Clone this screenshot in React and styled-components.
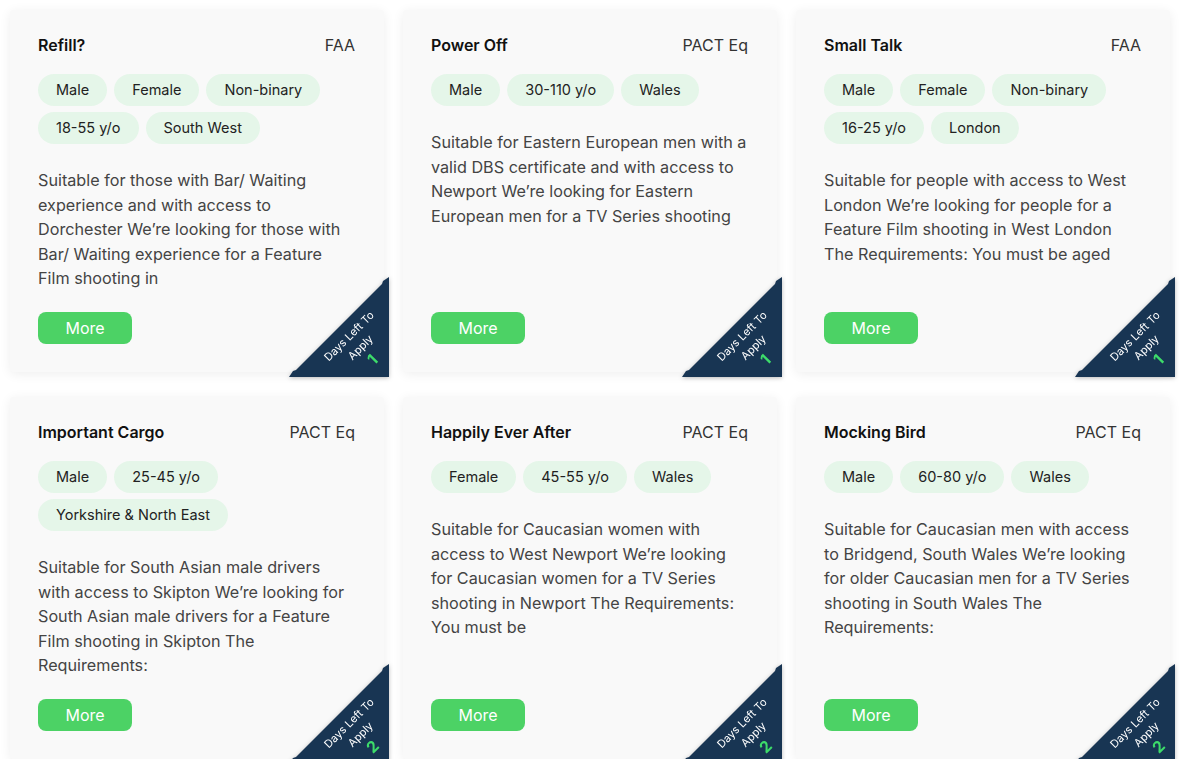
import styled, { createGlobalStyle } from "styled-components";

const GlobalStyle = createGlobalStyle`
  body {
    margin: 0;
    background: #ffffff;
    font-family: Inter, "Noto Sans", sans-serif;
  }
`;

const Grid = styled.div`
  display: grid;
  grid-template-columns: repeat(3, 374px);
  column-gap: 19px;
  row-gap: 25px;
  padding: 10px 0 0 10px;
`;

const Card = styled.div`
  position: relative;
  box-sizing: border-box;
  min-height: 362px;
  background: #f9f9f9;
  border-radius: 4px;
  box-shadow: 0 2px 12px rgba(0, 0, 0, 0.07);
  padding: 25px 29px 28px 28px;
  display: flex;
  flex-direction: column;
`;

const Header = styled.div`
  display: flex;
  justify-content: space-between;
  align-items: center;
  line-height: 20px;
`;

const Title = styled.h3`
  margin: 0;
  font-size: 16px;
  font-weight: 600;
  color: #111;
`;

const Union = styled.span`
  font-size: 16px;
  color: #333;
`;

const Tags = styled.div`
  display: flex;
  flex-wrap: wrap;
  gap: 6px 7px;
  margin-top: 19px;
`;

const Tag = styled.span`
  height: 32px;
  line-height: 32px;
  padding: 0 18px;
  border-radius: 16px;
  background: #e5f6e9;
  color: #222;
  font-size: 14.5px;
`;

const Description = styled.p`
  margin: 24px 0 0;
  font-size: 16.2px;
  line-height: 24.5px;
  color: #444;
`;

const MoreButton = styled.button`
  margin-top: auto;
  width: 94px;
  height: 32px;
  border: none;
  border-radius: 8px;
  background: #4cd265;
  color: #fff;
  font-family: inherit;
  font-size: 16px;
  cursor: pointer;
`;

const Ribbon = styled.div`
  position: absolute;
  right: -5px;
  bottom: -5px;
  width: 100px;
  height: 100px;
  filter: drop-shadow(0 1px 2px rgba(0, 0, 0, 0.25));
`;

const RibbonShape = styled.svg`
  display: block;
`;

const RibbonText = styled.div`
  position: absolute;
  left: 72px;
  top: 71px;
  transform: translate(-50%, -50%) rotate(-45deg);
  text-align: center;
  color: #fff;
  font-size: 11px;
  line-height: 16px;
  white-space: nowrap;
`;

const DaysLeft = styled.div`
  color: #3ddc6a;
  font-size: 16px;
  font-weight: 700;
  line-height: 18px;
`;

const jobs = [
  {
    title: "Refill?",
    union: "FAA",
    tags: ["Male", "Female", "Non-binary", "18-55 y/o", "South West"],
    text: "Suitable for those with Bar/ Waiting experience and with access to Dorchester We’re looking for those with Bar/ Waiting experience for a Feature Film shooting in",
    days: 1,
  },
  {
    title: "Power Off",
    union: "PACT Eq",
    tags: ["Male", "30-110 y/o", "Wales"],
    text: "Suitable for Eastern European men with a valid DBS certificate and with access to Newport We’re looking for Eastern European men for a TV Series shooting",
    days: 1,
  },
  {
    title: "Small Talk",
    union: "FAA",
    tags: ["Male", "Female", "Non-binary", "16-25 y/o", "London"],
    text: "Suitable for people with access to West London We’re looking for people for a Feature Film shooting in West London The Requirements: You must be aged",
    days: 1,
  },
  {
    title: "Important Cargo",
    union: "PACT Eq",
    tags: ["Male", "25-45 y/o", "Yorkshire & North East"],
    text: "Suitable for South Asian male drivers with access to Skipton We’re looking for South Asian male drivers for a Feature Film shooting in Skipton The Requirements:",
    days: 2,
  },
  {
    title: "Happily Ever After",
    union: "PACT Eq",
    tags: ["Female", "45-55 y/o", "Wales"],
    text: "Suitable for Caucasian women with access to West Newport We’re looking for Caucasian women for a TV Series shooting in Newport The Requirements: You must be",
    days: 2,
  },
  {
    title: "Mocking Bird",
    union: "PACT Eq",
    tags: ["Male", "60-80 y/o", "Wales"],
    text: "Suitable for Caucasian men with access to Bridgend, South Wales We’re looking for older Caucasian men for a TV Series shooting in South Wales The Requirements:",
    days: 2,
  },
];

const DaysRibbon = ({ days }) => (
  <Ribbon>
    <RibbonShape width="100" height="100" viewBox="0 0 100 100">
      <polygon
        points="0,100 4,94 7,93 93,7 94,4 100,0 100,100"
        fill="#183553"
      />
    </RibbonShape>
    <RibbonText>
      <div>Days Left To</div>
      <div>Apply</div>
      <DaysLeft>{days}</DaysLeft>
    </RibbonText>
  </Ribbon>
);

const App = () => {
  return (
    <>
      <GlobalStyle />
      <Grid>
        {jobs.map((job) => (
          <Card key={job.title}>
            <Header>
              <Title>{job.title}</Title>
              <Union>{job.union}</Union>
            </Header>
            <Tags>
              {job.tags.map((t) => (
                <Tag key={t}>{t}</Tag>
              ))}
            </Tags>
            <Description>{job.text}</Description>
            <MoreButton>More</MoreButton>
            <DaysRibbon days={job.days} />
          </Card>
        ))}
      </Grid>
    </>
  );
};

export default App;
